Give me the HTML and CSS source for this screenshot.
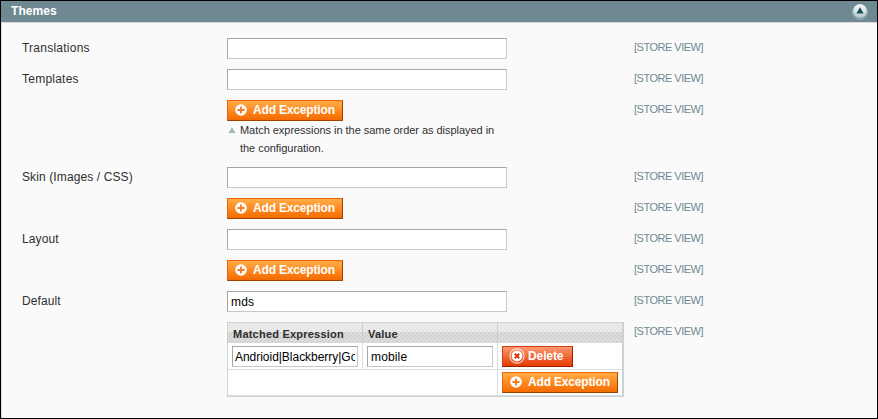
FILE: index.html
```
<!DOCTYPE html>
<html lang="en">
<head>
<meta charset="utf-8">
<title>Themes</title>
<link rel="stylesheet" href="styles.css">
</head>
<body>
<svg class="defs" width="0" height="0">
  <defs>
    <symbol id="plus" viewBox="0 0 12 12"><circle cx="6" cy="6" r="5.8" fill="#fff"/><path d="M6 2.5v7M2.5 6h7" stroke="#f47a1c" stroke-width="1.8"/></symbol>
  </defs>
</svg>
<section class="panel">
  <header class="head">
    <h1>Themes</h1>
    <svg class="toggle" width="16" height="17" viewBox="0 0 16 17">
      <defs><linearGradient id="knob" x2="0" y2="1"><stop offset="0" stop-color="#f6fafa"/><stop offset="1" stop-color="#b2c8cc"/></linearGradient></defs>
      <circle cx="8" cy="8.9" r="7.4" fill="#839da5" stroke="#9bb0b6"/>
      <circle cx="8" cy="8" r="6.8" fill="url(#knob)"/>
      <path d="M8 4.2l3.5 6.3h-7z" fill="#1d4b5a"/>
    </svg>
  </header>
  <div class="form">
    <div class="row"><label>Translations</label><div class="value"><input class="field"></div><span class="scope">[STORE VIEW]</span></div>
    <div class="row"><label>Templates</label><div class="value"><input class="field"></div><span class="scope">[STORE VIEW]</span></div>
    <div class="row noted"><label></label><div class="value"><button class="btn"><svg width="12" height="12"><use href="#plus"/></svg><span>Add Exception</span></button>
      <p class="note"><svg width="8" height="6"><path d="M4 0l3.6 6H.4z" fill="#a5b9be"/></svg><span>Match expressions in the same order as displayed in<br>the configuration.</span></p></div><span class="scope">[STORE VIEW]</span></div>
    <div class="row"><label class="tight">Skin (Images / CSS)</label><div class="value"><input class="field"></div><span class="scope">[STORE VIEW]</span></div>
    <div class="row"><label></label><div class="value"><button class="btn"><svg width="12" height="12"><use href="#plus"/></svg><span>Add Exception</span></button></div><span class="scope">[STORE VIEW]</span></div>
    <div class="row"><label class="tight">Layout</label><div class="value"><input class="field"></div><span class="scope">[STORE VIEW]</span></div>
    <div class="row"><label></label><div class="value"><button class="btn"><svg width="12" height="12"><use href="#plus"/></svg><span>Add Exception</span></button></div><span class="scope">[STORE VIEW]</span></div>
    <div class="row"><label class="tight">Default</label><div class="value"><input class="field" value="mds"></div><span class="scope">[STORE VIEW]</span></div>
    <div class="row"><label></label><div class="value">
      <div class="grid">
        <div class="line titles"><b>Matched Expression</b><b>Value</b><b></b></div>
        <div class="line cells">
          <div><input class="field expression" value="Andrioid|Blackberry|Google"></div>
          <div><input class="field" value="mobile"></div>
          <div><button class="btn delete"><svg width="16" height="16" viewBox="0 0 16 16"><circle cx="8" cy="8" r="7.1" fill="none" stroke="#fbd8c8" stroke-width="1.1"/><circle cx="8" cy="8" r="5.4" fill="#fff"/><path d="M5.8 5.8l4.4 4.4M10.2 5.8l-4.4 4.4" stroke="#d43c10" stroke-width="2"/></svg><span>Delete</span></button></div>
        </div>
        <div class="line foot"><div></div><div><button class="btn"><svg width="12" height="12"><use href="#plus"/></svg><span>Add Exception</span></button></div></div>
      </div>
    </div><span class="scope">[STORE VIEW]</span></div>
  </div>
</section>
</body>
</html>
```
FILE: styles.css
```
* { box-sizing: border-box; }
body { margin: 0; font: 12px/15px "Liberation Sans", Arial, sans-serif; color: #2f2f2f; }
.defs { display: block; }
.panel { display: flex; flex-direction: column; height: 419px; border: 1px solid #000; background: #fafafa; overflow: hidden; }
.head { display: flex; flex: none; align-items: center; justify-content: space-between; height: 22px; padding: 0 9px 0 10px; background: #6f8992; border-bottom: 1px solid #d6d6d6; }
.head h1 { margin: 0; font-size: 12px; line-height: 15px; color: #fff; letter-spacing: .05px; }
.toggle { display: block; }
.form { display: flex; flex: 1; flex-direction: column; gap: 10px; padding: 15px 0 0 20px; border-left: 1px solid #d6d6d6; }
.row { display: grid; grid-template-columns: 205px 407px 90px; height: 21px; }
.row.noted { height: 57px; }
label { padding-top: 3px; letter-spacing: .24px; }
label.tight { letter-spacing: .11px; }
.scope { padding-top: 2px; font-size: 11px; letter-spacing: -.5px; color: #6f8992; }
.field { display: block; width: 280px; height: 21px; margin: 0; padding: 1px 3px 0; border: 1px solid; border-color: #a6a6a6 #c8c8c8 #c8c8c8 #a6a6a6; border-radius: 0; background: #fff; font: 12px/15px "Liberation Sans", Arial, sans-serif; letter-spacing: .15px; color: #000; }
.btn { display: flex; align-items: center; gap: 6px; width: 116px; height: 21px; margin: 0; padding: 0 0 1px 7px; border: 1px solid; border-color: #ed6502 #a04300 #a04300 #ed6502; border-radius: 0; background: linear-gradient(#ffac47, #fd8a22 50%, #f46b00); color: #fff; font: bold 12px/15px "Liberation Sans", Arial, sans-serif; letter-spacing: -.17px; white-space: nowrap; }
.btn svg { flex: none; }
.delete { width: 71px; gap: 3px; padding-left: 6px; border-color: #d04010 #a02000 #a02000 #d04010; background: linear-gradient(#fb9a70, #f1683a 50%, #e63b00); letter-spacing: -.1px; }
.note { display: flex; gap: 4px; margin: 0; padding: 0 0 0 1px; font-size: 11px; line-height: 18px; letter-spacing: -.04px; white-space: nowrap; }
.note svg { margin-top: 6px; flex: none; }
.grid { width: 397px; height: 75px; border: 1px solid #cbd3d4; border-right: 2px solid #cbd3d4; background: #fff; }
.line { display: grid; grid-template-columns: 135px 135px 1fr; }
.titles { height: 20px; background: repeating-linear-gradient(135deg, rgba(255,255,255,.4) 0 1px, transparent 1px 2.83px), linear-gradient(#e6e6e6 9px, #d3d3d3 9px); }
.titles b { padding: 4px 5px 0; font-size: 11px; line-height: 15px; letter-spacing: .22px; border-right: 1px solid #ccc; }
.titles b:last-child, .cells > div:last-child { border-right: 0; }
.cells { height: 27px; border-bottom: 1px solid #dae0e0; }
.cells > div { padding: 3px 4px; border-right: 1px solid #dae0e0; }
.cells .field { width: 126px; }
.cells .expression { padding: 1px 2px 0; letter-spacing: -.03px; }
.foot { height: 26px; grid-template-columns: 270px 1fr; border-bottom: 1px solid #dae0e0; }
.foot > div { padding: 2px 4px; }
.foot > div:first-child { border-right: 1px solid #dae0e0; }
```
